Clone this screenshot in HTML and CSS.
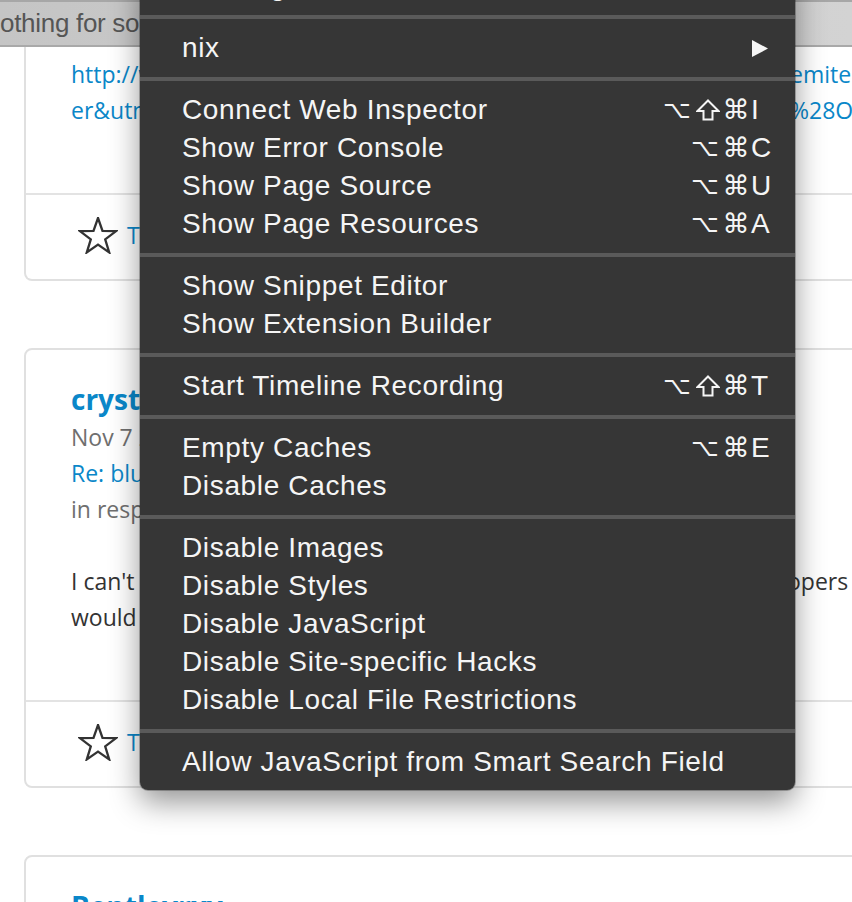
FILE: index.html
```html
<!DOCTYPE html>
<html>
<head>
<meta charset="utf-8">
<title>Develop menu</title>
<link rel="stylesheet" href="styles.css">
</head>
<body>
<div class="screen">
  <header class="tabbar"><span class="tab-title">othing for some of the more popular posts</span></header>

  <main class="viewport">
    <section class="card card-cut">
      <div class="card-body">
        <div class="split link"><span class="l">http://www.example.com/shop/item/?utm_source=newslett</span><span class="r">emiter</span></div>
        <div class="split link"><span class="l">er&amp;utm_medium=email&amp;utm_campaign=holiday</span><span class="r">%28Official%29</span></div>
      </div>
      <div class="card-foot">
        <svg class="star" viewBox="0 0 40 37" width="40" height="37"><polygon points="20,1 24.5,13.9 38.1,14.1 27.2,22.4 31.2,35.4 20,27.6 8.8,35.4 12.8,22.4 1.9,14.1 15.5,13.9"/></svg>
        <span class="link foot-link">Thanks</span>
      </div>
    </section>

    <section class="card">
      <div class="card-body">
        <div class="name">crystalmoonz</div>
        <div class="meta">Nov 7 2013</div>
        <div class="link">Re: blue screen after update</div>
        <div class="meta">in response to the original post</div>
        <div class="text">
          <div class="split"><span class="l">I can't believe this is still happening. The devel</span><span class="r">opers</span></div>
          <div>would have fixed this by now.</div>
        </div>
      </div>
      <div class="card-foot">
        <svg class="star" viewBox="0 0 40 37" width="40" height="37"><polygon points="20,1 24.5,13.9 38.1,14.1 27.2,22.4 31.2,35.4 20,27.6 8.8,35.4 12.8,22.4 1.9,14.1 15.5,13.9"/></svg>
        <span class="link foot-link">Thanks</span>
      </div>
    </section>

    <section class="card card-last">
      <div class="card-body">
        <div class="name">Bentleyrxy</div>
      </div>
    </section>
  </main>

  <nav class="menu">
    <div class="item"><span class="label">User Agent</span><span class="sub"><svg viewBox="0 0 16 17" width="16" height="17"><polygon points="0,0 16,8.5 0,17"/></svg></span></div>
    <div class="sep"></div>
    <div class="item"><span class="label">nix</span><span class="sub"><svg viewBox="0 0 16 17" width="16" height="17"><polygon points="0,0 16,8.5 0,17"/></svg></span></div>
    <div class="sep"></div>
    <div class="item"><span class="label">Connect Web Inspector</span><span class="keys"><span class="mods"><i class="opt">⌥</i><i class="shift"><svg viewBox="0 0 24 22" width="24" height="22"><polygon points="12,1.5 22.5,12 16.5,12 16.5,20.5 7.5,20.5 7.5,12 1.5,12"/></svg></i><i>⌘</i></span><span class="key">I</span></span></div>
    <div class="item"><span class="label">Show Error Console</span><span class="keys"><span class="mods"><i class="opt">⌥</i><i>⌘</i></span><span class="key">C</span></span></div>
    <div class="item"><span class="label">Show Page Source</span><span class="keys"><span class="mods"><i class="opt">⌥</i><i>⌘</i></span><span class="key">U</span></span></div>
    <div class="item"><span class="label">Show Page Resources</span><span class="keys"><span class="mods"><i class="opt">⌥</i><i>⌘</i></span><span class="key">A</span></span></div>
    <div class="sep"></div>
    <div class="item"><span class="label">Show Snippet Editor</span></div>
    <div class="item"><span class="label">Show Extension Builder</span></div>
    <div class="sep"></div>
    <div class="item"><span class="label">Start Timeline Recording</span><span class="keys"><span class="mods"><i class="opt">⌥</i><i class="shift"><svg viewBox="0 0 24 22" width="24" height="22"><polygon points="12,1.5 22.5,12 16.5,12 16.5,20.5 7.5,20.5 7.5,12 1.5,12"/></svg></i><i>⌘</i></span><span class="key">T</span></span></div>
    <div class="sep"></div>
    <div class="item"><span class="label">Empty Caches</span><span class="keys"><span class="mods"><i class="opt">⌥</i><i>⌘</i></span><span class="key">E</span></span></div>
    <div class="item"><span class="label">Disable Caches</span></div>
    <div class="sep"></div>
    <div class="item"><span class="label">Disable Images</span></div>
    <div class="item"><span class="label">Disable Styles</span></div>
    <div class="item"><span class="label">Disable JavaScript</span></div>
    <div class="item"><span class="label">Disable Site-specific Hacks</span></div>
    <div class="item"><span class="label">Disable Local File Restrictions</span></div>
    <div class="sep"></div>
    <div class="item"><span class="label">Allow JavaScript from Smart Search Field</span></div>
  </nav>
</div>
</body>
</html>
```

FILE: styles.css
```css
* { box-sizing: border-box; }

html, body {
  margin: 0;
  padding: 0;
  background: #ffffff;
}

.screen {
  position: relative;
  width: 852px;
  height: 902px;
  overflow: hidden;
  font-family: "Open Sans", "Liberation Sans", sans-serif;
}

/* browser tab bar */
.tabbar {
  height: 47px;
  border-top: 2px solid #a7a7a7;
  border-bottom: 2px solid #a9a9a9;
  background: linear-gradient(to right, #c5c5c5, #d3d3d3);
  font-family: "Liberation Sans", Arial, sans-serif;
  font-size: 26px;
  letter-spacing: -0.3px;
  line-height: 43px;
  color: #555555;
  white-space: nowrap;
  overflow: hidden;
}

/* page */
.viewport {
  height: 855px;
  overflow: hidden;
  padding-left: 24px;
}

.card {
  width: 900px;
  border: 2px solid #e0e0e0;
  border-radius: 8px;
}

.card + .card { margin-top: 67px; }

.card-cut {
  border-top: none;
  border-top-left-radius: 0;
  border-top-right-radius: 0;
}

.card-body {
  padding: 30px 0 65px 45px;
  font-size: 23px;
  line-height: 36px;
  color: #333333;
}

.card-cut .card-body { padding-top: 9px; }

.card-last .card-body { padding-bottom: 20px; }

.split {
  display: flex;
  white-space: nowrap;
}

.split .l {
  flex: 0 0 719px;
  overflow: hidden;
}

.text .split .l { flex-basis: 716px; }

.link { color: #0a87c9; }

.name {
  font-weight: 700;
  font-size: 28px;
  line-height: 39px;
  color: #0a87c9;
}

.meta { color: #6f6f6f; }

.text {
  margin-top: 36px;
  color: #333333;
}

.card-foot {
  height: 86px;
  border-top: 2px solid #e3e3e3;
  padding: 22px 0 0 52px;
  display: flex;
  align-items: flex-start;
  gap: 9px;
}

.star {
  display: block;
  fill: none;
  stroke: #333333;
  stroke-width: 2.3;
  stroke-linejoin: miter;
}

.foot-link {
  font-size: 23px;
  line-height: 37px;
}

/* context menu */
.menu {
  position: absolute;
  left: 140px;
  top: -33px;
  width: 655px;
  padding-bottom: 9px;
  background: #363636;
  border-radius: 0 0 8px 8px;
  box-shadow: 0 12px 30px rgba(0, 0, 0, 0.42), 0 0 0 1px rgba(0, 0, 0, 0.25);
  font-family: "Liberation Sans", Arial, sans-serif;
  color: #f5f5f5;
  z-index: 2;
}

.item {
  height: 38px;
  padding: 0 25px 0 42px;
  display: flex;
  align-items: center;
  justify-content: space-between;
  white-space: nowrap;
}

.label {
  font-size: 28px;
  letter-spacing: 0.65px;
}

.sub {
  width: 20px;
  display: flex;
  justify-content: flex-start;
  padding-left: 2px;
}

.sub svg {
  display: block;
  fill: #f5f5f5;
}

.keys {
  display: flex;
  align-items: center;
}

.mods {
  display: flex;
  align-items: center;
  justify-content: flex-end;
}

.mods i {
  font-style: normal;
  width: 28px;
  text-align: center;
  font-family: "DejaVu Sans", sans-serif;
  font-size: 27px;
  line-height: 38px;
}

.mods .opt {
  font-size: 24px;
  width: 31px;
  text-align: left;
}

.mods .shift {
  display: flex;
  align-items: center;
  justify-content: center;
}

.shift svg {
  display: block;
  fill: none;
  stroke: #f5f5f5;
  stroke-width: 2;
  stroke-linejoin: miter;
}

.key {
  width: 20px;
  font-size: 28px;
  text-align: left;
  padding-left: 1px;
}

.sep {
  height: 24px;
  padding: 10px 0;
}

.sep::before {
  content: "";
  display: block;
  height: 4px;
  background: #5a5a5a;
}
```
